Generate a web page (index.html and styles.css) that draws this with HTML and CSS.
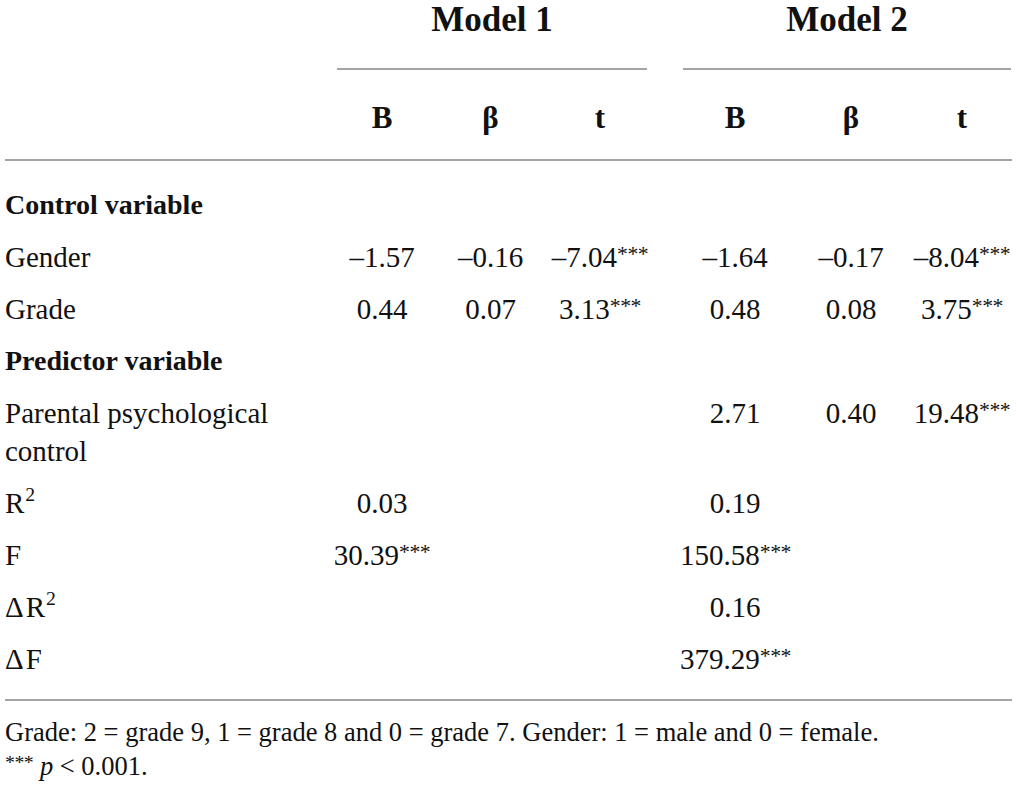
FILE: index.html
```html
<!DOCTYPE html>
<html lang="en">
<head>
    <meta charset="UTF-8">
    <meta name="viewport" content="width=device-width, initial-scale=1.0">
    <title>Hierarchical regression: Model 1 and Model 2</title>
    <link rel="stylesheet" href="styles.css">
</head>
<body>
    <table class="results">
        <colgroup>
            <col class="c-label">
            <col class="c-b1">
            <col class="c-beta1">
            <col class="c-t1">
            <col class="c-gap">
            <col class="c-b2">
            <col class="c-beta2">
            <col class="c-t2">
        </colgroup>
        <thead>
            <tr class="model-head">
                <th></th>
                <th colspan="3" class="model model-1"><span>Model 1</span></th>
                <th></th>
                <th colspan="3" class="model model-2"><span>Model 2</span></th>
            </tr>
            <tr class="stat-head">
                <th></th>
                <th>B</th>
                <th>β</th>
                <th>t</th>
                <th></th>
                <th>B</th>
                <th>β</th>
                <th>t</th>
            </tr>
        </thead>
        <tbody>
            <!-- Control variables -->
            <tr class="section first">
                <td class="label" colspan="8">Control variable</td>
            </tr>
            <tr>
                <td class="label">Gender</td>
                <td>–1.57</td>
                <td>–0.16</td>
                <td>–7.04<span class="sig">***</span></td>
                <td></td>
                <td>–1.64</td>
                <td>–0.17</td>
                <td>–8.04<span class="sig">***</span></td>
            </tr>
            <tr>
                <td class="label">Grade</td>
                <td>0.44</td>
                <td>0.07</td>
                <td>3.13<span class="sig">***</span></td>
                <td></td>
                <td>0.48</td>
                <td>0.08</td>
                <td>3.75<span class="sig">***</span></td>
            </tr>

            <!-- Predictor -->
            <tr class="section">
                <td class="label" colspan="8">Predictor variable</td>
            </tr>
            <tr>
                <td class="label">Parental psychological control</td>
                <td></td>
                <td></td>
                <td></td>
                <td></td>
                <td>2.71</td>
                <td>0.40</td>
                <td>19.48<span class="sig">***</span></td>
            </tr>

            <!-- Model fit -->
            <tr>
                <td class="label">R<sup class="sq">2</sup></td>
                <td>0.03</td>
                <td></td>
                <td></td>
                <td></td>
                <td>0.19</td>
                <td></td>
                <td></td>
            </tr>
            <tr>
                <td class="label">F</td>
                <td>30.39<span class="sig">***</span></td>
                <td></td>
                <td></td>
                <td></td>
                <td>150.58<span class="sig">***</span></td>
                <td></td>
                <td></td>
            </tr>
            <tr>
                <td class="label"><span class="delta">Δ</span>R<sup class="sq">2</sup></td>
                <td></td>
                <td></td>
                <td></td>
                <td></td>
                <td>0.16</td>
                <td></td>
                <td></td>
            </tr>
            <tr class="last">
                <td class="label"><span class="delta">Δ</span>F</td>
                <td></td>
                <td></td>
                <td></td>
                <td></td>
                <td>379.29<span class="sig">***</span></td>
                <td></td>
                <td></td>
            </tr>
        </tbody>
    </table>

    <div class="notes">
        <p>Grade: 2 = grade 9, 1 = grade 8 and 0 = grade 7. Gender: 1 = male and 0 = female.</p>
        <p><span class="sig">***</span> <i>p</i> &lt; 0.001.</p>
    </div>
</body>
</html>
```

FILE: styles.css
```css
body {
    margin: 0;
    padding: 0 5px;
    font-family: 'Liberation Serif', 'Times New Roman', serif;
    color: #111;
    background: #fff;
}
.results {
    width: 1007px;
    table-layout: fixed;
    border-collapse: separate;
    border-spacing: 0;
    font-size: 29px;
}
.c-label { width: 323px; }
.c-b1 { width: 108px; }
.c-beta1 { width: 109px; }
.c-t1 { width: 110px; }
.c-gap { width: 25px; }
.c-b2 { width: 110px; }
.c-beta2 { width: 122px; }
.c-t2 { width: 100px; }
th, td {
    padding: 7px 0;
    line-height: 38px;
    text-align: center;
    vertical-align: top;
    font-weight: normal;
    white-space: nowrap;
}
td.label {
    text-align: left;
    white-space: normal;
}
.model-head th {
    padding: 0;
}
.model {
    font-size: 35px;
    font-weight: bold;
    line-height: 40px;
}
.model span {
    display: block;
    padding-bottom: 28px;
    border-bottom: 2px solid #a4a4a4;
}
.model-1 span {
    margin: 0 8px 0 9px;
}
.model-2 span {
    margin: 0 1px 0 3px;
}
.stat-head th {
    font-size: 31px;
    font-weight: bold;
    padding: 29px 0 22px;
    border-bottom: 2px solid #a4a4a4;
}
.section td {
    font-size: 28px;
    font-weight: bold;
}
.section.first td {
    padding-top: 25px;
}
.last td {
    padding-bottom: 21px;
}
.sig {
    font-size: 0.75em;
    vertical-align: 0.28em;
    line-height: 0;
    letter-spacing: -0.5px;
}
.sq {
    font-size: 0.68em;
    vertical-align: 0.6em;
    line-height: 0;
    margin-left: 1px;
}
.delta {
    margin-right: 2px;
}
.notes {
    width: 1007px;
    border-top: 2px solid #a4a4a4;
    padding-top: 14px;
    font-size: 26.5px;
    line-height: 34px;
}
.notes p {
    margin: 0;
}
```
